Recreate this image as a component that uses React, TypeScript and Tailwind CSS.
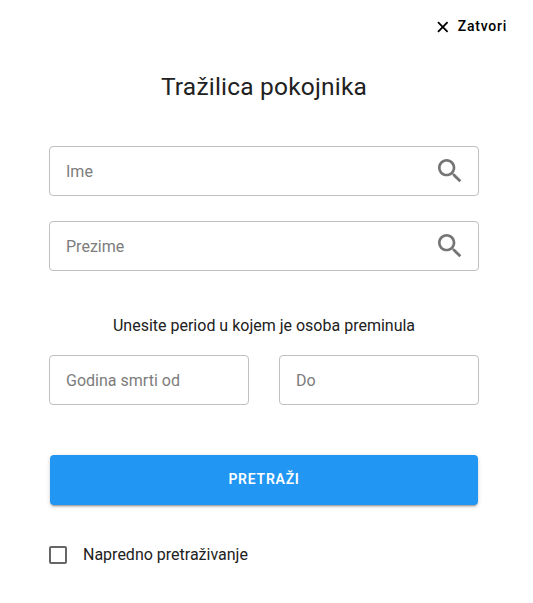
import { useState } from 'react'

interface SearchFieldProps {
  label: string
  withIcon?: boolean
}

function SearchField({ label, withIcon }: SearchFieldProps) {
  return (
    <label className="flex h-[50px] min-w-0 flex-1 items-center rounded border border-[#c0c0c0] pl-4 pr-3">
      <input
        type="text"
        placeholder={label}
        className="w-full min-w-0 bg-transparent pt-0.5 text-base tracking-[0.01px] text-[#212121] outline-none placeholder:text-[#7c7c7c]"
      />
      {withIcon && (
        <svg viewBox="0 0 24 24" className="h-8 w-8 shrink-0 fill-[#757575]">
          <path d="M15.5 14h-.79l-.28-.27C15.41 12.59 16 11.11 16 9.5 16 5.91 13.09 3 9.5 3S3 5.91 3 9.5 5.91 16 9.5 16c1.61 0 3.09-.59 4.23-1.57l.27.28v.79l5 4.99L20.49 19l-4.99-5zm-6 0C7.01 14 5 11.99 5 9.5S7.01 5 9.5 5 14 7.01 14 9.5 11.99 14 9.5 14z" />
        </svg>
      )}
    </label>
  )
}

export default function App() {
  const [advanced, setAdvanced] = useState(false)

  return (
    <div className="h-[603px] w-[533px] overflow-hidden bg-white pl-[49px] pr-[54px] font-['Roboto',sans-serif] text-[#212121]">
      <div className="-mr-7 flex h-[53px] justify-end">
        <button className="flex h-[51px] items-center gap-[9px] text-sm font-medium tracking-[0.75px] text-black">
          <svg viewBox="0 0 12 12" className="mt-[3px] h-3 w-3 stroke-black stroke-[1.8]">
            <path d="M1 1.2l9.6 9.6M10.6 1.2l-9.6 9.6" />
          </svg>
          Zatvori
        </button>
      </div>

      <h1 className="mt-[18px] text-center text-[24.5px] leading-8 tracking-[0.2px]">Tražilica pokojnika</h1>

      <form onSubmit={(e) => e.preventDefault()}>
        <div className="mt-[43px] flex flex-col gap-[25px]">
          <div className="flex"><SearchField label="Ime" withIcon /></div>
          <div className="flex"><SearchField label="Prezime" withIcon /></div>
        </div>

        <p className="mt-[43px] text-center text-base">Unesite period u kojem je osoba preminula</p>
        <div className="mt-[17px] flex gap-[30px]">
          <SearchField label="Godina smrti od" />
          <SearchField label="Do" />
        </div>

        <button
          type="submit"
          className="mx-px mt-[50px] flex h-[50px] w-[428px] items-center justify-center rounded bg-[#2196f3] pb-0.5 text-sm font-semibold tracking-[0.75px] text-white shadow-[0_3px_1px_-2px_rgba(0,0,0,0.2),0_2px_2px_0_rgba(0,0,0,0.14),0_1px_5px_0_rgba(0,0,0,0.12)]"
        >
          PRETRAŽI
        </button>

        <label className="mt-[38px] flex items-center gap-4 text-base">
          <input
            type="checkbox"
            checked={advanced}
            onChange={(e) => setAdvanced(e.target.checked)}
            className="h-[18px] w-[18px] appearance-none rounded-[2px] border-2 border-[#666] checked:bg-[#2196f3]"
          />
          Napredno pretraživanje
        </label>
      </form>
    </div>
  )
}
